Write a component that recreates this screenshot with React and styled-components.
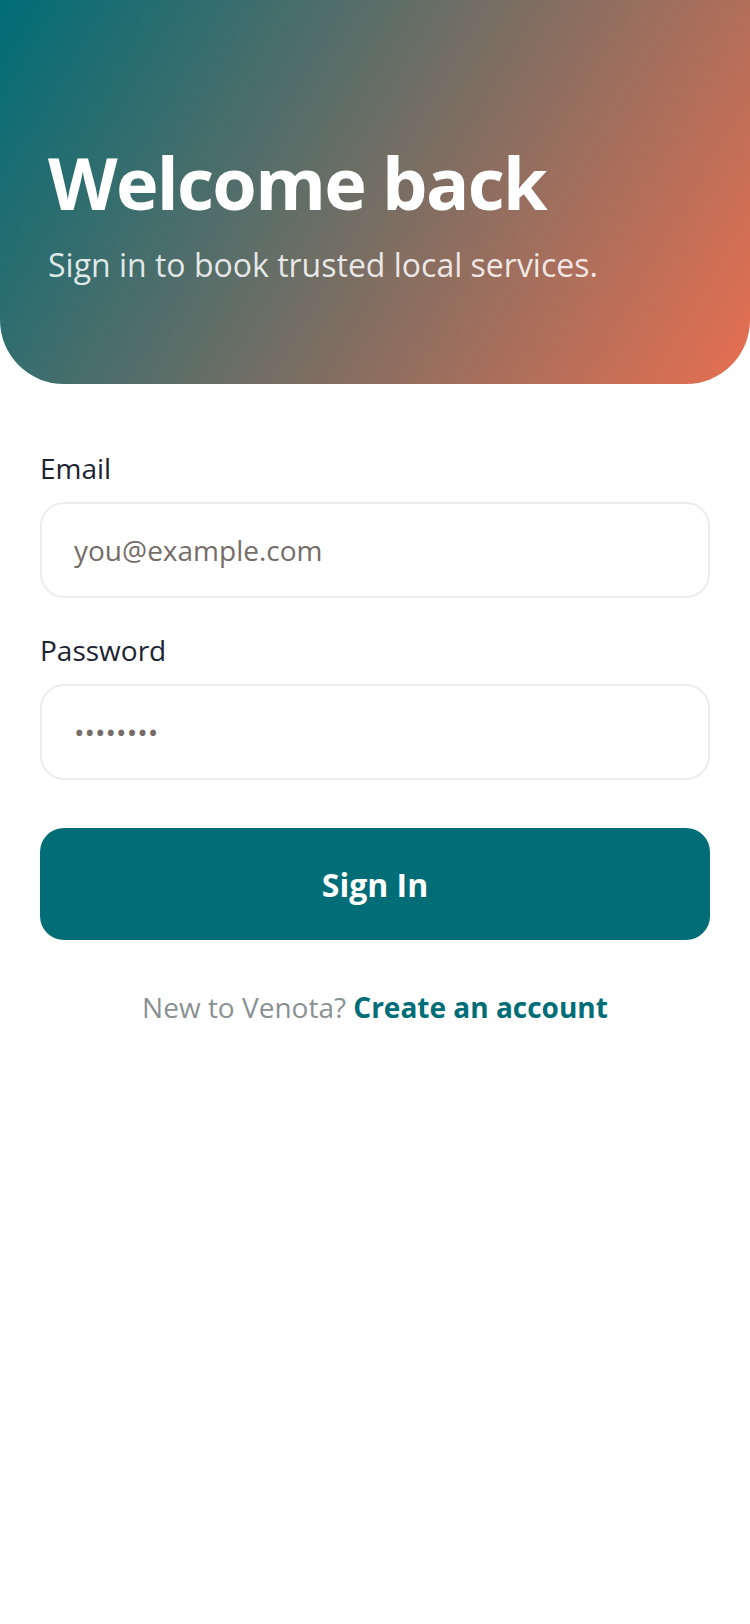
import styled, { createGlobalStyle } from "styled-components";

const GlobalStyle = createGlobalStyle`
  * {
    box-sizing: border-box;
  }

  body {
    margin: 0;
    background: #ffffff;
    font-family: "Open Sans", "Noto Sans", sans-serif;
  }
`;

const Page = styled.div`
  min-height: 100vh;
  background: #ffffff;
`;

const Hero = styled.header`
  padding: 139px 48px 96px;
  background: linear-gradient(120deg, #006d77 0%, #e76f51 100%);
  border-radius: 0 0 64px 64px;
`;

const Title = styled.h1`
  margin: 0;
  font-size: 72px;
  line-height: 1.2;
  font-weight: 700;
  letter-spacing: -1.7px;
  color: #ffffff;
`;

const Subtitle = styled.p`
  margin: 18px 0 0;
  font-size: 32px;
  line-height: 1.4;
  font-weight: 400;
  color: rgba(255, 255, 255, 0.85);
`;

const Form = styled.form`
  display: flex;
  flex-direction: column;
  padding: 65px 40px 0;
`;

const Field = styled.div`
  display: flex;
  flex-direction: column;
  margin-bottom: ${(p) => p.$gap || 0}px;
`;

const Label = styled.label`
  font-size: 28px;
  line-height: 38px;
  color: #1c2331;
  margin-bottom: 15px;
`;

const Input = styled.input`
  width: 100%;
  height: 96px;
  padding: 0 32px;
  border: 2px solid #ededed;
  border-radius: 24px;
  background: #ffffff;
  font-family: "Open Sans", "Noto Sans", sans-serif;
  font-size: 28px;
  color: #766d69;
  outline: none;

  &::placeholder {
    color: #766d69;
  }
`;

const SubmitButton = styled.button`
  margin-top: 48px;
  height: 112px;
  border: none;
  border-radius: 24px;
  background: #006d77;
  color: #ffffff;
  font-family: "Open Sans", "Noto Sans", sans-serif;
  font-size: 32px;
  font-weight: 700;
  cursor: pointer;
`;

const Footer = styled.p`
  margin: 48px 0 0;
  text-align: center;
  font-size: 28px;
  line-height: 1.4;
  color: #8a9193;
`;

const FooterLink = styled.a`
  font-weight: 700;
  color: #006d77;
  text-decoration: none;
`;

const App = () => {
  return (
    <Page>
      <GlobalStyle />
      <Hero>
        <Title>Welcome back</Title>
        <Subtitle>Sign in to book trusted local services.</Subtitle>
      </Hero>
      <Form onSubmit={(e) => e.preventDefault()}>
        <Field $gap={33}>
          <Label htmlFor="email">Email</Label>
          <Input id="email" type="email" placeholder="you@example.com" />
        </Field>
        <Field>
          <Label htmlFor="password">Password</Label>
          <Input id="password" type="password" defaultValue="password" />
        </Field>
        <SubmitButton type="submit">Sign In</SubmitButton>
        <Footer>
          New to Venota? <FooterLink href="#">Create an account</FooterLink>
        </Footer>
      </Form>
    </Page>
  );
};

export default App;
